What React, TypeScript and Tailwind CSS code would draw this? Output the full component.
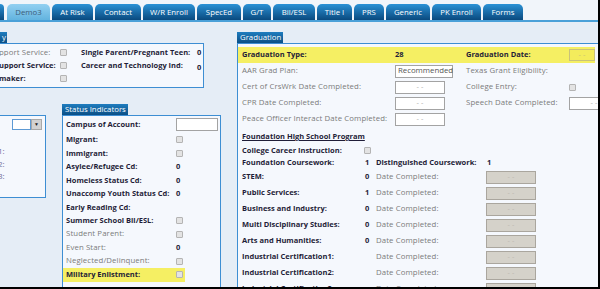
import React from "react";

const Cb = () => (
  <span className="block w-[7px] h-[7px] bg-[#e3e3e3] border border-[#b4b4b4] rounded-[1px]" />
);

const WhiteInput = ({ cls, text }: { cls: string; text?: string }) => (
  <div className={`h-[13px] bg-white border border-[#a3a3a3] flex items-center ${text ? "justify-start pl-[2px] text-[#555] text-[7.8px]" : "justify-center text-[#b0b0b0]"} ${cls}`}>
    {text ?? "- -"}
  </div>
);

const GrayInput = () => (
  <div className="w-[50px] h-[13px] bg-[#d5d2ca] border border-[#aaa69e] flex items-center justify-center text-[#bdb9b1]">
    - -
  </div>
);

const Tab = ({ label, cls, active }: { label: string; cls: string; active?: boolean }) => (
  <div
    className={`h-[16px] rounded-t-[5px] flex items-center justify-center pt-[1px] text-[7.8px] ${
      active
        ? "bg-linear-to-b from-[#92d0f1] to-[#62b3df] text-[#3d5c78]"
        : "bg-linear-to-b from-[#2b92d6] to-[#0a4a7f] text-white"
    } ${cls}`}
  >
    {label}
  </div>
);

const HeaderTab = ({ label, cls }: { label: string; cls: string }) => (
  <div className={`h-[11px] bg-linear-to-b from-[#1f7dbf] to-[#0a4f86] text-white text-[7.8px] flex items-center pl-[3px] whitespace-nowrap ${cls}`}>
    {label}
  </div>
);

const B = "font-bold text-[#1f1d38]";
const G = "text-[#7b7b7b] text-[7.8px] tracking-[0.1px]";

type SRow = { label: string; bold: boolean; value: "cb" | "0" | "" | "input"; hl?: boolean };

const statusRows: SRow[] = [
  { label: "Migrant:", bold: true, value: "cb" },
  { label: "Immigrant:", bold: true, value: "cb" },
  { label: "Asylee/Refugee Cd:", bold: true, value: "0" },
  { label: "Homeless Status Cd:", bold: true, value: "0" },
  { label: "Unaccomp Youth Status Cd:", bold: true, value: "0" },
  { label: "Early Reading Cd:", bold: true, value: "" },
  { label: "Summer School Bil/ESL:", bold: true, value: "cb" },
  { label: "Student Parent:", bold: false, value: "cb" },
  { label: "Even Start:", bold: false, value: "0" },
  { label: "Neglected/Delinquent:", bold: false, value: "cb" },
  { label: "Military Enlistment:", bold: true, value: "cb", hl: true },
];

type FRow = { label: string; value: string };
const foundationRows: FRow[] = [
  { label: "STEM:", value: "0" },
  { label: "Public Services:", value: "1" },
  { label: "Business and Industry:", value: "0" },
  { label: "Multi Disciplinary Studies:", value: "0" },
  { label: "Arts and Humanities:", value: "0" },
  { label: "Industrial Certification1:", value: "" },
  { label: "Industrial Certification2:", value: "" },
  { label: "Industrial Certification3:", value: "" },
];

export default function App() {
  return (
    <div className="w-[600px] h-[289px] overflow-hidden bg-[#e5edf6] border-r-2 border-b-2 border-black font-['Open_Sans',sans-serif] text-[7.5px] leading-none">
      {/* Tabs */}
      <div className="h-[20px] flex items-end gap-[2px] bg-[#f1f5fa]">
        <div className="w-[4px] h-[16px] shrink-0 rounded-tr-[4px] bg-linear-to-b from-[#2b92d6] to-[#0a4a7f]" />
        <Tab label="Demo3" cls="w-[43px] ml-[1px] shrink-0" active />
        <Tab label="At Risk" cls="w-[41px] shrink-0" />
        <Tab label="Contact" cls="w-[46px] shrink-0" />
        <Tab label="W/R Enroll" cls="w-[52px] shrink-0" />
        <Tab label="SpecEd" cls="w-[44px] shrink-0" />
        <Tab label="G/T" cls="w-[28px] shrink-0" />
        <Tab label="Bil/ESL" cls="w-[42px] shrink-0" />
        <Tab label="Title I" cls="w-[35px] shrink-0" />
        <Tab label="PRS" cls="w-[30px] shrink-0" />
        <Tab label="Generic" cls="w-[44px] shrink-0" />
        <Tab label="PK Enroll" cls="w-[49px] shrink-0" />
        <Tab label="Forms" cls="w-[40px] shrink-0" />
      </div>
      <div className="h-[2px] bg-[#4aa0d8]" />

      <div className="flex">
        {/* Left column */}
        <div className="w-[221px] shrink-0 flex flex-col pt-[10px]">
          <div className="w-[7px] h-[11px] bg-linear-to-b from-[#1f7dbf] to-[#0a4f86] text-white text-[7.8px] flex items-center justify-end pr-[1px]">
            y
          </div>
          <div className="w-[204px] h-[45px] border-t border-r border-b border-[#3d8ed3] bg-[#f5f8fd] pt-[2px]">
            <div className="h-[13px] flex items-center">
              <div className="w-[60px] shrink-0 whitespace-nowrap overflow-hidden">
                <span className={`${G} block -ml-[1px]`}>pport Service:</span>
              </div>
              <div className="w-[21px] shrink-0"><Cb /></div>
              <div className={`${B} w-[116px] shrink-0 whitespace-nowrap`}>Single Parent/Pregnant Teen:</div>
              <div className={B}>0</div>
            </div>
            <div className="h-[13px] flex items-center">
              <div className="w-[60px] shrink-0 whitespace-nowrap overflow-hidden">
                <span className={`${B} block -ml-[1px]`}>upport Service:</span>
              </div>
              <div className="w-[21px] shrink-0"><Cb /></div>
              <div className={`${B} w-[116px] shrink-0 whitespace-nowrap`}>Career and Technology Ind:</div>
              <div className={`${B} pt-[4px]`}>0</div>
            </div>
            <div className="h-[13px] flex items-center">
              <div className="w-[60px] shrink-0 whitespace-nowrap overflow-hidden">
                <span className={`${B} block -ml-[1px]`}>maker:</span>
              </div>
              <div className="w-[21px] shrink-0"><Cb /></div>
            </div>
          </div>

          <div className="flex items-start mt-[16px]">
            {/* small box */}
            <div className="w-[46px] h-[83px] shrink-0 mt-[11px] border-t border-r border-b border-[#3d8ed3] bg-[#f5f8fd] pt-[3px] pl-[12px]">
              <div className="flex h-[11px]">
                <div className="w-[19px] h-[11px] bg-white border border-[#5d9ad4]" />
                <div className="w-[11px] h-[11px] bg-[#d2d2d2] border border-[#a8a8a8] flex items-center justify-center text-[5px] text-[#222]">
                  ▼
                </div>
              </div>
              <div className="-ml-[14px] mt-[15px] flex flex-col text-[#6f6c98] text-[8px]">
                <div className="h-[12.5px] flex items-center">1:</div>
                <div className="h-[12.5px] flex items-center">2:</div>
                <div className="h-[12.5px] flex items-center">3:</div>
              </div>
            </div>

            {/* status indicators */}
            <div className="ml-[16px] w-[159px] shrink-0 flex flex-col">
              <HeaderTab label="Status Indicators" cls="w-[66px]" />
              <div className="h-[200px] border border-[#3d8ed3] bg-[#f5f8fd]">
                <div className="h-[17px] flex items-center">
                  <div className={`${B} w-[113px] pl-[3px] whitespace-nowrap`}>Campus of Account:</div>
                  <WhiteInput cls="w-[42px]" text=" " />
                </div>
                {statusRows.map((r) => (
                  <div key={r.label} className="h-[13.5px] flex items-center">
                    <div className={`h-[13.5px] w-[122px] flex items-center ${r.hl ? "bg-[#f5ef63]" : ""}`}>
                      <div className={`${r.bold ? B : G} w-[113px] pl-[3px] whitespace-nowrap`}>{r.label}</div>
                      {r.value === "cb" && <Cb />}
                      {r.value === "0" && <span className={B}>0</span>}
                    </div>
                  </div>
                ))}
              </div>
            </div>
          </div>
        </div>

        {/* Graduation */}
        <div className="ml-[16px] pt-[10px] w-[400px] shrink-0 flex flex-col">
          <HeaderTab label="Graduation" cls="w-[46px]" />
          <div className="h-[260px] border-t border-l border-[#3d8ed3] bg-[#f5f8fd] pt-[3px]">
            <div className="w-[357px] h-[16px] flex items-center bg-[#f5ef63]">
              <div className={`${B} w-[157px] pl-[4px] whitespace-nowrap`}>Graduation Type:</div>
              <div className={`${B} w-[71px]`}>28</div>
              <div className={`${B} w-[103px] whitespace-nowrap`}>Graduation Date:</div>
              <div className="w-[26px] h-[12px] bg-[#f3ec5c] border border-[#c9c27a] flex items-center justify-center text-[#c9c27a]">
                - -
              </div>
            </div>
            <div className="h-[16px] flex items-center">
              <div className={`${G} w-[157px] pl-[4px] whitespace-nowrap`}>AAR Grad Plan:</div>
              <div className="w-[71px]">
                <WhiteInput cls="w-[58px]" text="Recommended" />
              </div>
              <div className={`${G} w-[103px] whitespace-nowrap`}>Texas Grant Eligibility:</div>
            </div>
            <div className="h-[16px] flex items-center">
              <div className={`${G} w-[157px] pl-[4px] whitespace-nowrap`}>Cert of CrsWrk Date Completed:</div>
              <div className="w-[71px]">
                <WhiteInput cls="w-[50px]" />
              </div>
              <div className={`${G} w-[103px] whitespace-nowrap`}>College Entry:</div>
              <Cb />
            </div>
            <div className="h-[16px] flex items-center">
              <div className={`${G} w-[157px] pl-[4px] whitespace-nowrap`}>CPR Date Completed:</div>
              <div className="w-[71px]">
                <WhiteInput cls="w-[50px]" />
              </div>
              <div className={`${G} w-[103px] whitespace-nowrap`}>Speech Date Completed:</div>
              <WhiteInput cls="w-[50px]" />
            </div>
            <div className="h-[16px] flex items-center">
              <div className={`${G} w-[157px] pl-[4px] whitespace-nowrap`}>Peace Officer Interact Date Completed:</div>
              <div className="w-[71px]">
                <WhiteInput cls="w-[50px]" />
              </div>
            </div>

            <div className="h-[14px] mt-[3px] flex items-center pl-[4px]">
              <span className={`${B} underline underline-offset-[1px]`}>Foundation High School Program</span>
            </div>
            <div className="h-[13px] flex items-center">
              <div className={`${B} w-[126px] pl-[4px] whitespace-nowrap`}>College Career Instruction:</div>
              <Cb />
            </div>
            <div className="h-[12px] flex items-center">
              <div className={`${B} w-[127px] pl-[4px] whitespace-nowrap`}>Foundation Coursework:</div>
              <div className={`${B} w-[11px]`}>1</div>
              <div className={`${B} w-[111px] whitespace-nowrap`}>Distinguished Coursework:</div>
              <div className={B}>1</div>
            </div>
            {foundationRows.map((r) => (
              <div key={r.label} className="h-[16px] flex items-center">
                <div className={`${B} w-[127px] pl-[4px] whitespace-nowrap`}>{r.label}</div>
                <div className={`${B} w-[11px]`}>{r.value}</div>
                <div className={`${G} w-[110px] whitespace-nowrap`}>Date Completed:</div>
                <GrayInput />
              </div>
            ))}
          </div>
        </div>
      </div>
    </div>
  );
}
